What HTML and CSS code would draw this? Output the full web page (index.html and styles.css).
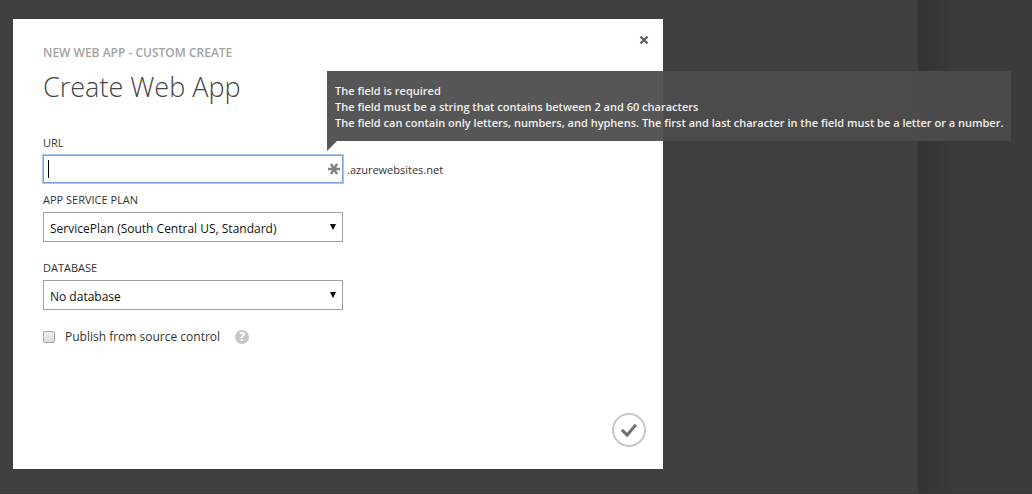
FILE: index.html
```html
<!DOCTYPE html>
<html lang="en">
<head>
<meta charset="utf-8">
<title>Create Web App</title>
<link rel="stylesheet" href="styles.css">
</head>
<body>
<div class="page">
  <main class="stage">
    <form class="dialog">
      <header class="dialog-head">
        <div>
          <p class="eyebrow">NEW WEB APP - CUSTOM CREATE</p>
          <h1 class="title">Create Web App</h1>
        </div>
        <button class="close" type="button" aria-label="Close">
          <svg viewBox="0 0 10 10" width="10" height="10"><path d="M1.5 1.5 8.5 8.5M8.5 1.5 1.5 8.5" stroke="#606060" stroke-width="2.4" fill="none"/></svg>
        </button>
      </header>

      <div class="field field-url">
        <label class="label" for="url">URL</label>
        <div class="url-row">
          <div class="url-box">
            <input class="control url-input" id="url" type="text" aria-describedby="url-tip">
            <span class="caret"></span>
            <svg class="required" viewBox="0 0 12 12" width="12" height="12"><path d="M0 6H12M3 .8 9 11.2M9 .8 3 11.2" stroke="#808080" stroke-width="2.4" fill="none"/></svg>
            <div class="tip" id="url-tip" role="tooltip">
              <p>The field is required</p>
              <p>The field must be a string that contains between 2 and 60 characters</p>
              <p>The field can contain only letters, numbers, and hyphens. The first and last character in the field must be a letter or a number.</p>
            </div>
          </div>
          <span class="suffix">.azurewebsites.net</span>
        </div>
      </div>

      <div class="field field-plan">
        <label class="label" for="plan">APP SERVICE PLAN</label>
        <div class="select-box">
          <select class="control select" id="plan"><option>ServicePlan (South Central US, Standard)</option></select>
          <svg class="arrow" viewBox="0 0 6 6" width="6" height="6"><path d="M0 0H6L3 6Z"/></svg>
        </div>
      </div>

      <div class="field field-database">
        <label class="label" for="database">DATABASE</label>
        <div class="select-box">
          <select class="control select" id="database"><option>No database</option></select>
          <svg class="arrow" viewBox="0 0 6 6" width="6" height="6"><path d="M0 0H6L3 6Z"/></svg>
        </div>
      </div>

      <div class="check-row">
        <input class="check" id="publish" type="checkbox">
        <label class="check-label" for="publish">Publish from source control</label>
        <button class="help" type="button" aria-label="Help">?</button>
      </div>

      <footer class="dialog-foot">
        <button class="confirm" type="submit" aria-label="Complete">
          <svg viewBox="0 0 34 34" width="34" height="34"><circle cx="17" cy="17" r="16" fill="#fff" stroke="#c8c8c8" stroke-width="2"/><path d="M9.8 16.8 15.2 22 23.8 11.8" stroke="#707070" stroke-width="3" fill="none"/></svg>
        </button>
      </footer>
    </form>
  </main>
  <aside class="edge"></aside>
</div>
</body>
</html>
```
FILE: styles.css
```css
* { box-sizing: border-box; }

body {
  margin: 0;
  background: #404040;
  color: #333;
  font-family: "Open Sans", "Noto Sans", sans-serif;
  font-size: 12px;
}

p, h1 { margin: 0; }
button { padding: 0; border: 0; background: none; cursor: pointer; }
svg { display: block; }

.page {
  display: grid;
  grid-template-columns: 1fr 114px;
  min-height: 100vh;
  border-bottom: 1px solid #3d373b;
}

.stage { display: flex; padding: 19px 13px 24px; }

.edge { background: linear-gradient(to right, #333 0, #3b3b3b 40px, #3c3c3c 100%); }

.dialog {
  display: flex;
  flex-direction: column;
  width: 100%;
  max-width: 650px;
  padding: 16px 14px 22px 30px;
  background: #fff;
}

.dialog-head { display: flex; justify-content: space-between; align-items: flex-start; }
.eyebrow { padding-top: 10px; color: #a3a3a3; font-size: 12px; font-weight: 600; line-height: 16px; }
.title { padding-top: 6px; color: #444; font-size: 27px; font-weight: 300; line-height: 40px; }
.close { display: flex; }

.field { display: flex; flex-direction: column; }
.field-url { margin-top: 28px; }
.field-plan { margin-top: 9px; }
.field-database { margin-top: 18px; }
.label { font-size: 11px; line-height: 16px; margin-bottom: 4px; }

.control {
  display: block;
  width: 100%;
  border: 1px solid #a0a0a0;
  border-radius: 0;
  background: #fff;
  color: #111;
  font-family: inherit;
  font-size: 12px;
}

.url-row { display: flex; align-items: center; gap: 4px; }
.url-box, .select-box { position: relative; width: 300px; max-width: 100%; }
.url-input { height: 28px; padding: 0 24px 0 6px; border-color: #7c9fe0; outline: 1px solid #a6c5f7; caret-color: transparent; }
.caret { position: absolute; left: 5px; top: 5px; width: 1px; height: 18px; background: #000; }
.required { position: absolute; right: 3px; top: 8px; }
.suffix { padding-top: 2px; font-size: 11px; line-height: 16px; }

.select { height: 30px; padding: 2px 24px 0 6px; appearance: none; }
.arrow { position: absolute; right: 7px; top: 12px; pointer-events: none; }

.tip {
  position: absolute;
  z-index: 1;
  left: calc(100% - 16px);
  bottom: calc(100% + 14px);
  padding: 12px 8px 10px;
  background: rgba(75, 75, 75, 0.94);
  color: #f0f0f0;
  font-size: 11px;
  font-weight: 600;
  line-height: 16px;
  white-space: nowrap;
}
.tip::after {
  content: "";
  position: absolute;
  left: 0;
  top: 100%;
  width: 10px;
  height: 10px;
  background: inherit;
  clip-path: polygon(0 0, 100% 0, 0 100%);
}

.check-row { display: flex; align-items: center; margin-top: 17px; }
.check {
  width: 12px;
  height: 12px;
  margin: 0 10px 0 0;
  appearance: none;
  border: 1px solid #a8a8a8;
  border-radius: 2px;
  background: linear-gradient(#eee, #dcdcdc);
}
.check-label { font-size: 12px; line-height: 20px; }
.help {
  width: 14px;
  height: 14px;
  margin-left: 15px;
  border-radius: 50%;
  background: #c6c6c6;
  color: #fff;
  font: bold 12px/14px "Open Sans", sans-serif;
}

.dialog-foot { display: flex; justify-content: flex-end; margin-top: auto; padding: 16px 3px 0 0; }
.confirm { display: block; }
```
